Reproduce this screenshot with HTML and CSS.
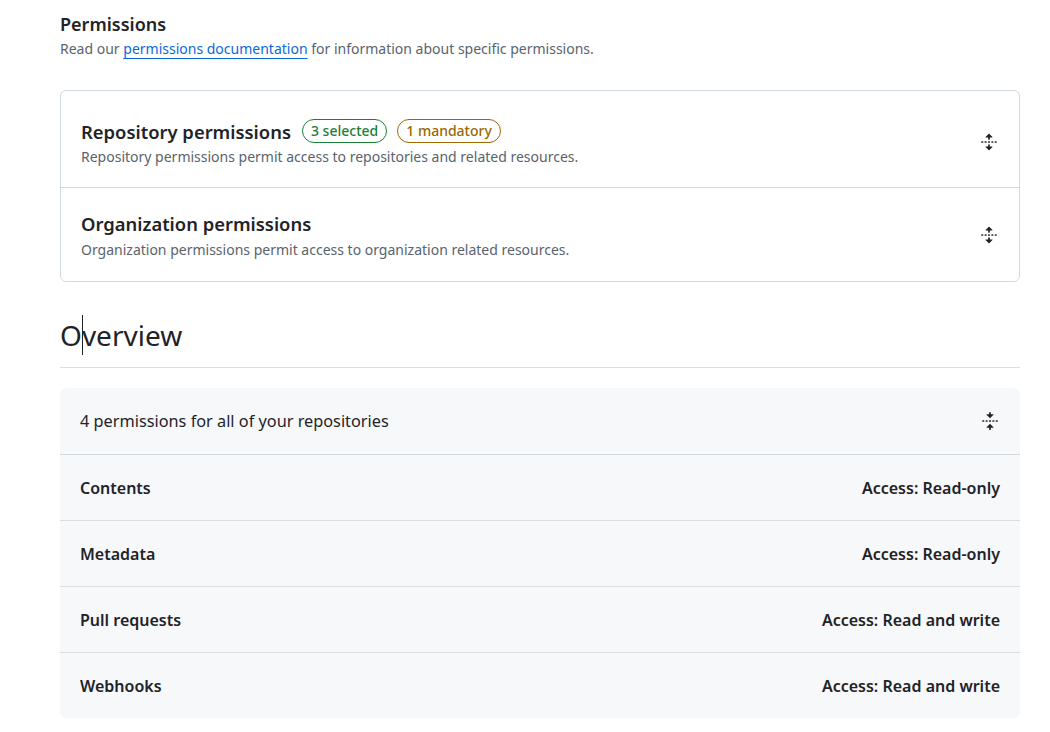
FILE: index.html
```html
<!DOCTYPE html>
<html lang="en">
<head>
<meta charset="utf-8">
<title>Permissions</title>
<link rel="stylesheet" href="styles.css">
</head>
<body>
<main class="page">
  <section class="intro">
    <h2 class="intro-title">Permissions</h2>
    <p class="intro-text">Read our <a class="link" href="#">permissions documentation</a> for information about specific permissions.</p>
  </section>

  <div class="perm-box">
    <div class="perm-row perm-row--first">
      <div class="perm-main">
        <div class="perm-head">
          <h3 class="perm-title">Repository permissions</h3>
          <span class="badge badge--green">3 selected</span>
          <span class="badge badge--yellow">1 mandatory</span>
        </div>
        <p class="perm-desc perm-desc--tight">Repository permissions permit access to repositories and related resources.</p>
      </div>
      <svg class="icon" viewBox="0 0 16 16" width="18" height="18" aria-hidden="true"><path d="m8.177.677 2.896 2.896a.25.25 0 0 1-.177.427H8.75v1.25a.75.75 0 0 1-1.5 0V4H5.104a.25.25 0 0 1-.177-.427L7.823.677a.25.25 0 0 1 .354 0ZM7.25 10.75a.75.75 0 0 1 1.5 0V12h2.146a.25.25 0 0 1 .177.427l-2.896 2.896a.25.25 0 0 1-.354 0l-2.896-2.896A.25.25 0 0 1 5.104 12H7.25v-1.25Zm-5-2a.75.75 0 0 0 0-1.5h-.5a.75.75 0 0 0 0 1.5h.5ZM6 8a.75.75 0 0 1-.75.75h-.5a.75.75 0 0 1 0-1.5h.5A.75.75 0 0 1 6 8Zm2.25.75a.75.75 0 0 0 0-1.5h-.5a.75.75 0 0 0 0 1.5h.5ZM12 8a.75.75 0 0 1-.75.75h-.5a.75.75 0 0 1 0-1.5h.5A.75.75 0 0 1 12 8Zm2.25.75a.75.75 0 0 0 0-1.5h-.5a.75.75 0 0 0 0 1.5h.5Z"/></svg>
    </div>
    <div class="perm-row perm-row--second">
      <div class="perm-main">
        <div class="perm-head">
          <h3 class="perm-title">Organization permissions</h3>
        </div>
        <p class="perm-desc">Organization permissions permit access to organization related resources.</p>
      </div>
      <svg class="icon" viewBox="0 0 16 16" width="18" height="18" aria-hidden="true"><path d="m8.177.677 2.896 2.896a.25.25 0 0 1-.177.427H8.75v1.25a.75.75 0 0 1-1.5 0V4H5.104a.25.25 0 0 1-.177-.427L7.823.677a.25.25 0 0 1 .354 0ZM7.25 10.75a.75.75 0 0 1 1.5 0V12h2.146a.25.25 0 0 1 .177.427l-2.896 2.896a.25.25 0 0 1-.354 0l-2.896-2.896A.25.25 0 0 1 5.104 12H7.25v-1.25Zm-5-2a.75.75 0 0 0 0-1.5h-.5a.75.75 0 0 0 0 1.5h.5ZM6 8a.75.75 0 0 1-.75.75h-.5a.75.75 0 0 1 0-1.5h.5A.75.75 0 0 1 6 8Zm2.25.75a.75.75 0 0 0 0-1.5h-.5a.75.75 0 0 0 0 1.5h.5ZM12 8a.75.75 0 0 1-.75.75h-.5a.75.75 0 0 1 0-1.5h.5A.75.75 0 0 1 12 8Zm2.25.75a.75.75 0 0 0 0-1.5h-.5a.75.75 0 0 0 0 1.5h.5Z"/></svg>
    </div>
  </div>

  <h2 class="overview-title">O<span class="caret"></span>verview</h2>

  <div class="summary">
    <div class="summary-head">
      <span>4 permissions for all of your repositories</span>
      <svg class="icon" viewBox="0 0 16 16" width="18" height="18" aria-hidden="true"><path d="M10.896 2H8.75V.75a.75.75 0 0 0-1.5 0V2H5.104a.25.25 0 0 0-.177.427l2.896 2.896a.25.25 0 0 0 .354 0l2.896-2.896A.25.25 0 0 0 10.896 2ZM8.75 15.25a.75.75 0 0 1-1.5 0V14H5.104a.25.25 0 0 1-.177-.427l2.896-2.896a.25.25 0 0 1 .354 0l2.896 2.896a.25.25 0 0 1-.177.427H8.75v1.25Zm-6.5-6.5a.75.75 0 0 0 0-1.5h-.5a.75.75 0 0 0 0 1.5h.5ZM6 8a.75.75 0 0 1-.75.75h-.5a.75.75 0 0 1 0-1.5h.5A.75.75 0 0 1 6 8Zm2.25.75a.75.75 0 0 0 0-1.5h-.5a.75.75 0 0 0 0 1.5h.5ZM12 8a.75.75 0 0 1-.75.75h-.5a.75.75 0 0 1 0-1.5h.5A.75.75 0 0 1 12 8Zm2.25.75a.75.75 0 0 0 0-1.5h-.5a.75.75 0 0 0 0 1.5h.5Z"/></svg>
    </div>
    <div class="summary-row"><span class="row-name">Contents</span><span class="row-access">Access: Read-only</span></div>
    <div class="summary-row"><span class="row-name">Metadata</span><span class="row-access">Access: Read-only</span></div>
    <div class="summary-row"><span class="row-name">Pull requests</span><span class="row-access">Access: Read and write</span></div>
    <div class="summary-row"><span class="row-name">Webhooks</span><span class="row-access">Access: Read and write</span></div>
  </div>
</main>
</body>
</html>
```

FILE: styles.css
```css
* { box-sizing: border-box; }

html, body {
  margin: 0;
  padding: 0;
  background: #ffffff;
}

body {
  font-family: "Noto Sans", "Liberation Sans", Arial, sans-serif;
  color: #1f2328;
}

.page {
  width: 960px;
  margin-left: 60px;
  padding-top: 12px;
}

.intro-title {
  margin: 0;
  font-size: 18px;
  line-height: 24px;
  font-weight: 600;
  color: #1f2328;
}

.intro-text {
  margin: 2px 0 0;
  font-size: 14px;
  line-height: 22px;
  color: #59636e;
}

.link {
  color: #0969da;
  text-decoration: underline;
  text-underline-offset: 4px;
}

.perm-box {
  margin-top: 30px;
  border: 1px solid #d1d9e0;
  border-radius: 6px;
}

.perm-row {
  display: flex;
  align-items: center;
  justify-content: space-between;
  padding-left: 20px;
  padding-right: 21px;
}

.perm-row--first {
  padding-top: 26px;
  padding-bottom: 20px;
  border-bottom: 1px solid #d1d9e0;
}

.perm-row--second {
  padding-top: 21px;
  padding-bottom: 21px;
}

.perm-head {
  display: flex;
  align-items: center;
  gap: 10px;
  height: 30px;
}

.perm-title {
  margin: 0;
  margin-right: 1px;
  font-size: 18.4px;
  font-weight: 600;
  line-height: 30px;
  color: #1f2328;
}

.badge {
  display: inline-flex;
  align-items: center;
  height: 24px;
  margin-top: -3px;
  padding: 0 8px;
  border: 1px solid;
  border-radius: 12px;
  font-size: 14px;
  font-weight: 500;
}

.badge--green {
  color: #1a7f37;
  border-color: #1a7f37;
}

.badge--yellow {
  color: #9a6700;
  border-color: #9a6700;
}

.perm-desc {
  margin: 1px 0 0;
  font-size: 14px;
  line-height: 20px;
  color: #59636e;
}

.perm-desc--tight {
  margin-top: 0;
}

.icon {
  display: block;
  flex: none;
  fill: #1f2328;
}

.overview-title {
  margin: 30px 0 0;
  padding-bottom: 9px;
  font-size: 28px;
  line-height: 46px;
  font-weight: 400;
  color: #1f2328;
  border-bottom: 1px solid #d8dee4;
}

.caret {
  display: inline-block;
  width: 1px;
  height: 40px;
  margin-right: -1px;
  vertical-align: -9px;
  background: #1f2328;
}

.summary {
  margin-top: 20px;
  background: #f6f8fa;
  border-radius: 6px;
}

.summary-head,
.summary-row {
  display: flex;
  align-items: center;
  justify-content: space-between;
  height: 66px;
  padding: 0 20px;
  font-size: 16px;
}

.summary-head {
  padding-right: 21px;
  font-size: 16.3px;
  color: #1f2328;
}

.summary-row {
  border-top: 1px solid #d8dee4;
  font-weight: 600;
}

.summary-head + .summary-row {
  border-top-color: #d1d9e0;
}
```
